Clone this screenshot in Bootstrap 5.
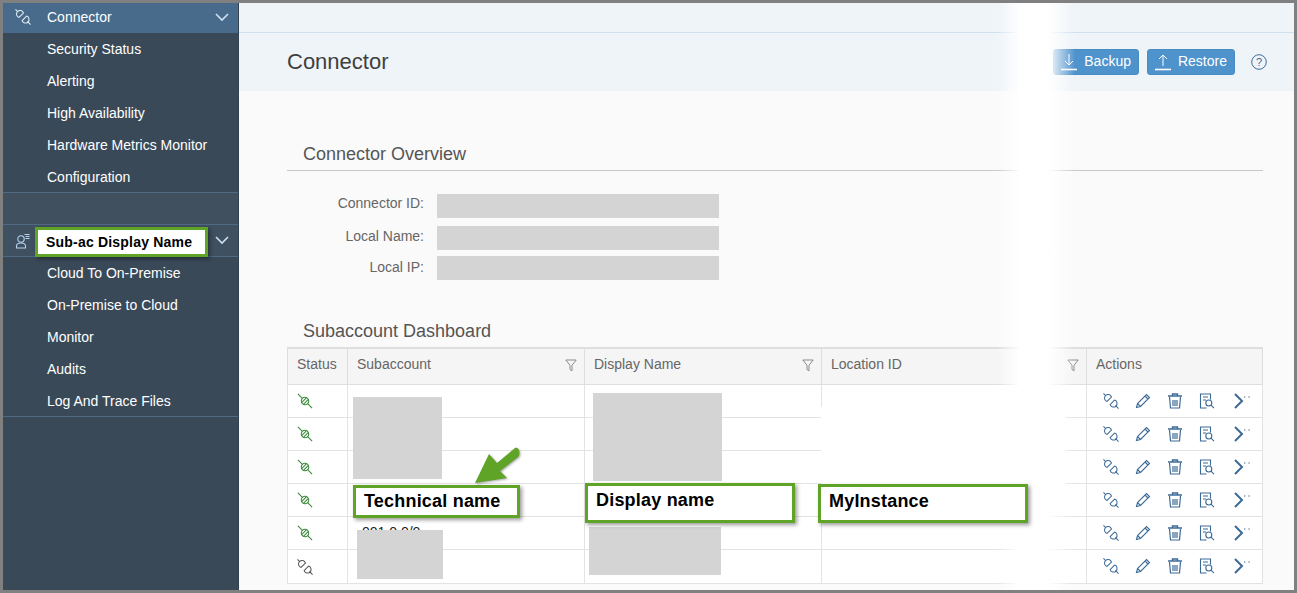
<!DOCTYPE html>
<html lang="en">
<head>
<meta charset="UTF-8">
<title>Connector</title>
<meta name="viewport" content="width=device-width, initial-scale=1.0">
<link href="https://cdn.jsdelivr.net/npm/bootstrap@5.3.2/dist/css/bootstrap.min.css" rel="stylesheet">
<style>
  html, body {height: 100%; overflow: hidden;}
  body {font-family: "Liberation Sans", Arial, sans-serif; font-size: 14px; color: #333; background: #808080;}
  .frame {height: 593px; padding: 3px; }
  .inner {height: 587px; width: 1291px; position: relative; overflow: hidden; background: #fafafa;}
  /* sidebar */
  .side {width: 236px; flex: 0 0 236px; background: #3a4958; color: #fff; border-right: 1px solid #34424f;}
  .side-head {height: 30px; background: #486b8c; padding: 0 9px 2px 12px;}
  .side-head2 {height: 33px; background: #3f5060; border-top: 1px solid #4f6a82; border-bottom: 1px solid #4f6a82; padding: 0 9px 0 12px;}
  .side-gap {height: 32px; margin-top: -1px; background: #40505f; border-top: 1px solid #4f6a82;}
  .side-label {margin-left: 16px; flex-grow: 1;}
  .side-link {display: block; height: 32px; line-height: 32px; padding-left: 44px; color: #fff; text-decoration: none; font-size: 14px;}
  .side-end {height: 160px; border-bottom: 1px solid #4f6a82;}
  /* page header */
  .top-strip {height: 30px; background: #eff4f9; border-bottom: 1px solid #cfe0f1;}
  .page-head {height: 58px; background: #eff4f9; padding-left: 48px; padding-right: 27px;}
  .page-title {font-size: 22px; font-weight: 400; color: #3f3f3f; margin: 0;}
  .head-tools {margin-top: -1px;}
  .head-btn {background: #4f93cd; border: 1px solid #4a8cc4; border-radius: 3px; color: #fff; font-size: 14px; height: 26px; padding: 0 7px 0 6px; display: flex; align-items: center; gap: 6px;}
  .help-ic {margin-left: 8px;}
  /* body */
  .content {padding: 0 31px 0 48px;}
  .sec-title {font-size: 18px; color: #555; padding-left: 16px; margin: 0; font-weight: 400;}
  .overview-title {margin-top: 53px; height: 27px; line-height: 20px; border-bottom: 1px solid #c8c8c8; width: 976px;}
  .ov-list {margin-top: 19px;}
  .ov-row {height: 31px;}
  .ov-row:nth-child(1) .ov-label {margin-top: -4px;}
  .ov-row:nth-child(2) .ov-val {margin-top: 2px;}
  .ov-label {width: 137px; text-align: right; color: #666; font-size: 14px; margin-right: 13px;}
  .ov-val {width: 282px; height: 24px; background: #d4d4d4;}
  .dash-title {margin-top: 38px; height: 26px; line-height: 20px;}
  /* table */
  .dash-table {table-layout: fixed; width: 975px; margin: 0; border-collapse: collapse; font-size: 14px; background: #fff;}
  .dash-table > thead > tr > th {height: 36px; background: #f5f5f5; font-weight: 400; color: #666; border: 1px solid #dedede; border-top-width: 2px; padding: 0 9px 4px; vertical-align: middle; box-shadow: none;}
  .dash-table > tbody > tr > td {height: 33px; padding: 0 9px; border: 1px solid #e3e3e3; vertical-align: middle; background: #fff; box-shadow: none;}
  .dash-table > tbody > tr:last-child > td {height: 34px;}
  .filter-ic {float: right; margin-right: -2px; margin-top: 5px;}
  .act-cell {display: flex; gap: 16px; padding-left: 7px;}
  .more-ic {margin-left: 2px;}
  .hidden-id {margin-left: 5px;}
  /* overlays */
  .redact {position: absolute; background: #d4d4d4;}
  .wipe {position: absolute; background: #fff;}
  .callout {position: absolute; background: #fff; border: 3px solid #5fa327; color: #000; font-weight: 700; box-shadow: 2px 2px 4px rgba(0,0,0,.4); padding-left: 8px; font-size: 18px; line-height: 26px; letter-spacing: .2px;}
  .callout-sm {font-size: 14px; line-height: 24px; letter-spacing: .2px;}
  .fade-band {position: absolute; top: 0; height: 587px; left: 994px; width: 78px; background: linear-gradient(to right, rgba(255,255,255,0), #fff 30%, #fff 65%, rgba(255,255,255,0));}
  .arrow-pic {position: absolute; left: 470px; top: 444px; filter: drop-shadow(1px 1px 1px rgba(0,0,0,.35));}
</style>
</head>
<body>
<svg width="0" height="0" class="position-absolute">
  <defs>
    <symbol id="ic-plug-off" viewBox="0 0 18 18">
      <g fill="none" stroke="currentColor" stroke-width="1.15">
        <path d="M.5 .5L3 3M14 14l3.500 3.500"/>
        <path d="M4.500 9.500L9.500 4.500A4 4 0 1 0 4.500 9.500z"/>
        <path d="M13 8L8 13A4 4 0 1 0 13 8z"/>
      </g>
    </symbol>
    <symbol id="ic-plug-on" viewBox="0 0 18 18">
      <g fill="none" stroke="currentColor" stroke-width="1.2">
        <path d="M1 1l5 5M17 17l-5-5"/>
        <circle cx="9" cy="9" r="4.200"/>
        <path d="M5.500 10.500l5-5M7.500 12.500l5-5"/>
      </g>
    </symbol>
    <symbol id="ic-pencil" viewBox="0 0 16 16">
      <path fill="none" stroke="currentColor" stroke-width="1.1" d="M1.500 14.500l1-4L11.500 1.500l3 3-9 9zM2.500 10.500l3 3M10 3l3 3"/>
    </symbol>
    <symbol id="ic-trash" viewBox="0 0 16 16">
      <path fill="none" stroke="currentColor" stroke-width="1.2" d="M2.500 4l1 11h9l1-11M6 7v6M8 7v6M10 7v6"/>
      <path fill="none" stroke="currentColor" stroke-width="1.4" d="M1 3h14M5.500 2.500V1h5v1.500"/>
    </symbol>
    <symbol id="ic-doc" viewBox="0 0 16 16">
      <path fill="none" stroke="currentColor" stroke-width="1.1" d="M11.500 6.500V1h-10v14h6M4 4h5M4 7h3"/>
      <circle cx="9.800" cy="10" r="3" fill="none" stroke="currentColor" stroke-width="1.1"/>
      <path stroke="currentColor" stroke-width="1.1" d="M12 12.200l3 3"/>
    </symbol>
    <symbol id="ic-more" viewBox="0 0 20 16">
      <path fill="none" stroke="currentColor" stroke-width="2" d="M2 1l7 7-7 7"/>
      <path stroke="currentColor" stroke-width="1" stroke-dasharray="1.4 3" d="M11 4h8"/>
    </symbol>
    <symbol id="ic-filter" viewBox="0 0 12 13">
      <path fill="none" stroke="#8b8b8b" stroke-width="1" d="M.8 1h10.400L7 6.300v5.600l-2-1.400V6.300z"/>
    </symbol>
  </defs>
</svg>
<div class="frame">
  <div class="inner d-flex">
    <div class="side">
      <div class="side-head d-flex align-items-center">
        <svg width="16" height="16" style="color:#e6eef5"><use href="#ic-plug-off"/></svg>
        <span class="side-label">Connector</span>
        <svg width="14" height="9" viewBox="0 0 14 9"><path fill="none" stroke="#cfe0f1" stroke-width="1.6" d="M1 1l6 6 6-6"/></svg>
      </div>
      <a class="side-link" href="#">Security Status</a>
      <a class="side-link" href="#">Alerting</a>
      <a class="side-link" href="#">High Availability</a>
      <a class="side-link" href="#">Hardware Metrics Monitor</a>
      <a class="side-link" href="#">Configuration</a>
      <div class="side-gap"></div>
      <div class="side-head2 d-flex align-items-center">
        <svg width="16" height="16" viewBox="0 0 16 16"><g fill="none" stroke="#b5d3ee" stroke-width="1.1"><circle cx="6" cy="6" r="3.200"/><path d="M1.500 15v-2c0-1.800 1.800-3 4.500-3s4.500 1.200 4.500 3v2z"/><path d="M9.500 1.500h5M10.500 3.500h4M10.500 5.500h4"/></g></svg>
        <span class="side-label"></span>
        <svg width="14" height="9" viewBox="0 0 14 9"><path fill="none" stroke="#cfe0f1" stroke-width="1.6" d="M1 1l6 6 6-6"/></svg>
      </div>
      <div class="side-end">
        <a class="side-link" href="#">Cloud To On-Premise</a>
        <a class="side-link" href="#">On-Premise to Cloud</a>
        <a class="side-link" href="#">Monitor</a>
        <a class="side-link" href="#">Audits</a>
        <a class="side-link" href="#">Log And Trace Files</a>
      </div>
    </div>
    <div class="flex-grow-1">
      <div class="top-strip"></div>
      <div class="page-head d-flex align-items-center justify-content-between">
        <h1 class="page-title">Connector</h1>
        <div class="head-tools d-flex align-items-center gap-2">
          <button class="head-btn" type="button">
            <svg width="18" height="18" viewBox="0 0 18 18"><path fill="none" stroke="#fff" d="M9 1v11M5 8l4 4 4-4"/><path stroke="#fff" stroke-width="1.600" d="M1 16.500h16"/></svg>Backup</button>
          <button class="head-btn" type="button">
            <svg width="18" height="18" viewBox="0 0 18 18"><path fill="none" stroke="#fff" d="M9 13V2M5 6l4-4 4 4"/><path stroke="#fff" stroke-width="1.600" d="M1 16.500h16"/></svg>Restore</button>
          <svg class="help-ic" width="16" height="16" viewBox="0 0 16 16"><circle cx="8" cy="8" r="7.300" fill="none" stroke="#3e6c9b"/><text x="8" y="12" text-anchor="middle" font-size="11" fill="#3e6c9b" font-family="Liberation Sans">?</text></svg>
        </div>
      </div>
      <div class="content">
        <h2 class="sec-title overview-title">Connector Overview</h2>
        <div class="ov-list">
          <div class="ov-row d-flex align-items-center"><div class="ov-label">Connector ID:</div><div class="ov-val"></div></div>
          <div class="ov-row d-flex align-items-center"><div class="ov-label">Local Name:</div><div class="ov-val"></div></div>
          <div class="ov-row d-flex align-items-center"><div class="ov-label">Local IP:</div><div class="ov-val"></div></div>
        </div>
        <h2 class="sec-title dash-title">Subaccount Dashboard</h2>
        <table class="table dash-table">
          <colgroup><col style="width:60px"><col style="width:237px"><col style="width:237px"><col style="width:265px"><col style="width:176px"></colgroup>
          <thead>
            <tr>
              <th>Status</th>
              <th>Subaccount<svg class="filter-ic" width="12" height="13"><use href="#ic-filter"/></svg></th>
              <th>Display Name<svg class="filter-ic" width="12" height="13"><use href="#ic-filter"/></svg></th>
              <th>Location ID<svg class="filter-ic" width="12" height="13"><use href="#ic-filter"/></svg></th>
              <th>Actions</th>
            </tr>
          </thead>
          <tbody id="rows"></tbody>
        </table>
      </div>
    </div>

    <div class="redact" style="left:350px;top:394px;width:89px;height:82px"></div>
    <div class="redact" style="left:590px;top:390px;width:129px;height:88px"></div>
    <div class="redact" style="left:354px;top:527px;width:86px;height:49px"></div>
    <div class="redact" style="left:586px;top:524px;width:132px;height:48px"></div>
    <div class="wipe" style="left:818px;top:404px;width:244px;height:78px"></div>
    <div class="fade-band"></div>
  </div>
</div>
<div class="callout callout-sm" style="left:35px;top:227px;width:173px;height:30px">Sub-ac Display Name</div>
<div class="callout" style="left:353px;top:485px;width:167px;height:33px;">Technical name</div>
<div class="callout" style="left:585px;top:483px;width:210px;height:40px;line-height:28px">Display name</div>
<div class="callout" style="left:818px;top:484px;width:210px;height:39px;line-height:28px">MyInstance</div>
<svg class="arrow-pic" width="56" height="42" viewBox="0 0 56 42"><path fill="#5fa327" d="M5 39L19 10l8 9 18-15c4-2 6 6 3 9L30 27l7 7z"/></svg>
<script>
  // table rows, last one is the disconnected status
  var act = '<div class="act-cell" style="color:#3c6a96">' +
    '<svg width="16" height="16"><use href="#ic-plug-off"/></svg>' +
    '<svg width="16" height="16"><use href="#ic-pencil"/></svg>' +
    '<svg width="16" height="16"><use href="#ic-trash"/></svg>' +
    '<svg width="16" height="16"><use href="#ic-doc"/></svg>' +
    '<svg class="more-ic" width="20" height="16"><use href="#ic-more"/></svg></div>';
  var html = '';
  for (var i = 0; i < 6; i++) {
    var st = i < 5 ? '<svg width="16" height="16" style="color:#3c8a3c"><use href="#ic-plug-on"/></svg>'
                   : '<svg width="16" height="16" style="color:#555"><use href="#ic-plug-off"/></svg>';
    var sub = i == 4 ? '<span class="hidden-id">001.0.0/0</span>' : '';
    html += '<tr><td>' + st + '</td><td>' + sub + '</td><td></td><td></td><td>' + act + '</td></tr>';
  }
  document.getElementById('rows').innerHTML = html;
</script>
<script src="https://cdn.jsdelivr.net/npm/bootstrap@5.3.2/dist/js/bootstrap.bundle.min.js"></script>
</body>
</html>
